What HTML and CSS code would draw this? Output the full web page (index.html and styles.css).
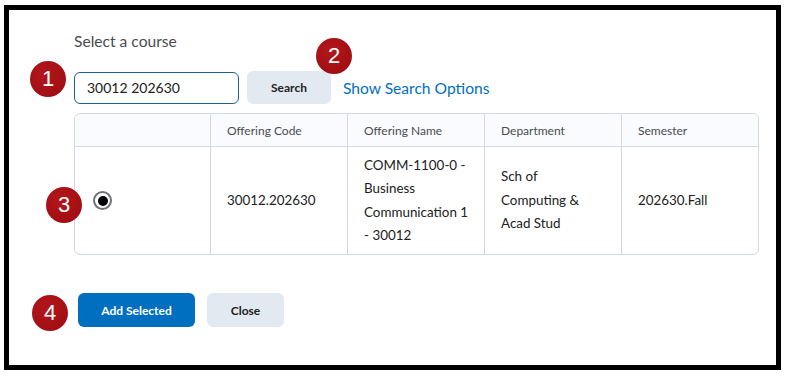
FILE: index.html
```html
<!DOCTYPE html>
<html lang="en">
<head>
<meta charset="utf-8">
<title>Select a course</title>
<link rel="stylesheet" href="styles.css">
</head>
<body>
<div class="frame">
  <h1 class="title">Select a course</h1>
  <div class="search-row">
    <input class="search-input" type="text" value="30012 202630">
    <button class="btn btn-secondary btn-search">Search</button>
    <a class="link" href="#">Show Search Options</a>
  </div>
  <table class="grid">
    <colgroup>
      <col class="c-select">
      <col class="c-data">
      <col class="c-data">
      <col class="c-data">
      <col class="c-data">
    </colgroup>
    <thead>
      <tr>
        <th class="col-select"></th>
        <th>Offering Code</th>
        <th>Offering Name</th>
        <th>Department</th>
        <th>Semester</th>
      </tr>
    </thead>
    <tbody>
      <tr>
        <td class="col-select"><span class="radio"><span class="radio-dot"></span></span></td>
        <td>30012.202630</td>
        <td>COMM-1100-0 - Business Communication 1 - 30012</td>
        <td class="cell-dept">Sch of Computing &amp; Acad Stud</td>
        <td>202630.Fall</td>
      </tr>
    </tbody>
  </table>
  <div class="actions">
    <button class="btn btn-primary btn-add">Add Selected</button>
    <button class="btn btn-secondary btn-close">Close</button>
  </div>
  <span class="badge badge-1">1</span>
  <span class="badge badge-2">2</span>
  <span class="badge badge-3">3</span>
  <span class="badge badge-4">4</span>
</div>
</body>
</html>
```
FILE: styles.css
```css
* { box-sizing: border-box; }
html, body { margin: 0; padding: 0; background: #fff; }
body {
  font-family: Lato, "Open Sans", "Liberation Sans", sans-serif;
  color: #202122;
}
.frame {
  position: relative;
  margin: 5px 0 0 4px;
  width: 777px;
  height: 365px;
  border: 5px solid #000;
  padding: 21px 0 0 65px;
  display: flex;
  flex-direction: column;
  align-items: flex-start;
}
.title {
  margin: 0;
  font-size: 15.6px;
  font-weight: 400;
  line-height: 20px;
  color: #494c4e;
}
.search-row {
  margin-top: 20px;
  display: flex;
  align-items: center;
  gap: 8px;
  height: 33px;
}
.search-input {
  width: 165px;
  height: 32px;
  border: 1px solid #1f5f92;
  border-radius: 6px;
  padding: 0 12px;
  font-family: inherit;
  font-size: 14px;
  color: #202122;
  outline: none;
}
.btn {
  font-family: inherit;
  font-weight: 700;
  font-size: 12px;
  border: none;
  border-radius: 6px;
  height: 33px;
  padding: 0;
  cursor: pointer;
}
.btn-secondary { background: #e3e9f1; color: #202122; }
.btn-primary { background: #006fbf; color: #fff; }
.btn-search { width: 84px; }
.link {
  margin-left: 4px;
  color: #006fbf;
  text-decoration: none;
  font-size: 15.6px;
}
.grid {
  margin-top: 9px;
  width: 685px;
  table-layout: fixed;
  border-collapse: separate;
  border-spacing: 0;
  border: 1px solid #d3d9e3;
  border-radius: 6px;
}
.c-select { width: 135px; }
.c-data { width: 137px; }
.grid th, .grid td {
  text-align: left;
  padding: 0 14px 0 16px;
  vertical-align: middle;
  border-left: 1px solid #d3d9e3;
}
.grid th:first-child, .grid td:first-child { border-left: none; }
.grid th {
  height: 33px;
  font-weight: 400;
  font-size: 12px;
  color: #494c4e;
  background: #f9fbff;
  border-bottom: 1px solid #d3d9e3;
}
.grid thead th:first-child { border-top-left-radius: 6px; }
.grid thead th:last-child { border-top-right-radius: 6px; }
.grid td {
  height: 107px;
  font-size: 13.4px;
  line-height: 23.5px;
  color: #202122;
}
.grid td.cell-dept { padding-right: 22px; }
.radio {
  display: flex;
  align-items: center;
  justify-content: center;
  width: 19px;
  height: 19px;
  margin-left: 2px;
  border: 2px solid #6e7377;
  border-radius: 50%;
  background: #fff;
}
.radio-dot {
  width: 10px;
  height: 10px;
  border-radius: 50%;
  background: #000;
}
.actions {
  margin-top: 38px;
  margin-left: 4px;
  display: flex;
  gap: 12px;
}
.btn-add { width: 117px; height: 34px; font-size: 12px; }
.btn-close { width: 77px; height: 34px; font-size: 12px; }
.badge {
  position: absolute;
  width: 36px;
  height: 36px;
  border-radius: 50%;
  background: radial-gradient(circle at 40% 35%, #b3161b 0%, #a20f14 70%, #8f0b10 100%);
  color: #fff;
  font-family: "Liberation Sans", Arial, sans-serif;
  font-size: 22px;
  line-height: 36px;
  text-align: center;
}
.badge-1 { left: 21px; top: 51px; }
.badge-2 { left: 307px; top: 28px; }
.badge-3 { left: 37px; top: 177px; }
.badge-4 { left: 23px; top: 285px; }
```
